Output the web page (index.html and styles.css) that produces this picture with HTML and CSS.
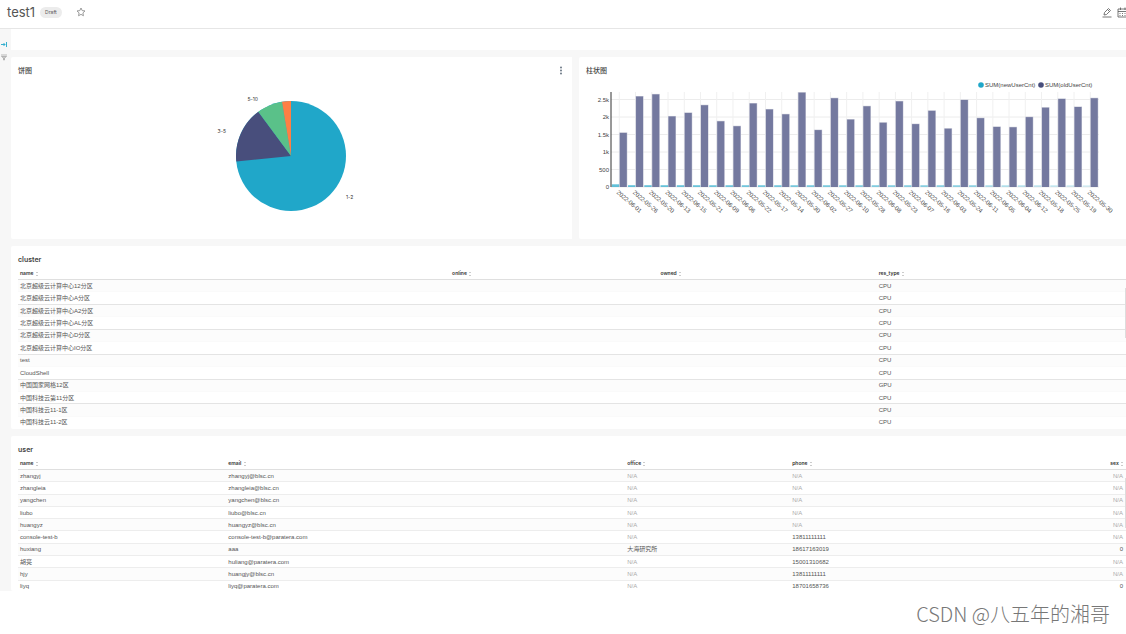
FILE: index.html
```html
<!DOCTYPE html>
<html lang="zh-CN">
<head>
<meta charset="utf-8">
<title>test1</title>
<link rel="stylesheet" href="styles.css">
</head>
<body>
<header class="topbar">
  <h1 class="title">test1</h1>
  <span class="badge">Draft</span>
  <button class="icon-btn star" aria-label="Favorite"><svg width="10" height="10" viewBox="0 0 20 20" fill="none" stroke="#8a8a8a" stroke-width="1.7" stroke-linejoin="round"><path d="M10 2l2.4 5.2 5.6.7-4.200 3.900 1.100 5.700L10 14.700l-4.900 2.800 1.100-5.700L2 7.900l5.600-.7z"/></svg></button>
  <div class="actions">
    <button class="icon-btn" aria-label="Edit"><svg width="10" height="11" viewBox="0 0 20 22" fill="none" stroke="#666" stroke-width="1.800"><path d="M4 16l1-5 8-8 4 4-8 8zM11 5l4 4M1 20h18"/></svg></button>
    <button class="icon-btn" aria-label="Schedule"><svg width="10" height="11" viewBox="0 0 20 22" fill="none" stroke="#555" stroke-width="1.600"><path d="M20 4H2v16h18M2 9h18M7 1v5M16 1v5"/><path d="M5 13h14M5 17h14" stroke-dasharray="2 3"/></svg></button>
  </div>
</header>
<div class="dashboard">
  <aside class="rail">
    <button class="icon-btn" aria-label="Expand"><svg width="6" height="7" viewBox="0 0 12 14" fill="none" stroke="#20a7c9" stroke-width="1.800"><path d="M0 7h8M5 4l3 3-3 3M11 2v10"/></svg></button>
    <button class="icon-btn" aria-label="Filter"><svg width="6" height="7" viewBox="0 0 12 14" fill="#ccc" stroke="#aaa" stroke-width="1.600"><path d="M0 2h12M1 5h10L7 8v4H5V8z"/></svg></button>
  </aside>
  <main class="content">
    <div class="strip"></div>
    <div class="charts">
      <section class="card">
        <div class="card-head"><h2>饼图</h2>
          <button class="icon-btn more" aria-label="More"><svg width="4" height="9" viewBox="0 0 4 9" fill="#5d6b7a"><circle cx="2" cy="1.500" r=".9"/><circle cx="2" cy="4.500" r=".9"/><circle cx="2" cy="7.500" r=".9"/></svg></button>
        </div>
        <svg class="chart" viewBox="0 0 561 164" role="img" aria-label="饼图">
          <circle cx="280" cy="81" r="55" fill="#20a7c9"/>
          <path d="M280 81L225.300 86.600A55 55 0 0 1 247.300 36.800z" fill="#484e7c"/>
          <path d="M280 81L247.300 36.800A55 55 0 0 1 271 26.700z" fill="#5ac189"/>
          <path d="M280 81L271 26.700A55 55 0 0 1 280 26z" fill="#ff7f44"/>
          <text x="247" y="26" text-anchor="end">5-10</text>
          <text x="215" y="58" text-anchor="end">3-5</text>
          <text x="335" y="124">1-2</text>
        </svg>
      </section>
      <section class="card">
        <div class="card-head"><h2>柱状图</h2></div>
        <svg class="chart" id="bars" viewBox="0 0 547 164" role="img" aria-label="柱状图">
          <circle cx="402" cy="10" r="2.800" fill="#20a7c9"/><text class="legend" x="406" y="12">SUM(newUserCnt)</text>
          <circle cx="462" cy="10" r="2.800" fill="#484e7c"/><text class="legend" x="466" y="12">SUM(oldUserCnt)</text>
        </svg>
      </section>
    </div>
    <section class="card">
      <div class="card-head"><h2>cluster</h2></div>
      <div class="scroll">
        <table class="grid cluster">
          <colgroup><col class="c-name"><col class="c-online"><col class="c-owned"><col></colgroup>
          <thead><tr><th>name <i class="sort"></i></th><th>online <i class="sort"></i></th><th>owned <i class="sort"></i></th><th>res_type <i class="sort"></i></th></tr></thead>
          <tbody>
            <tr><td>北京超级云计算中心12分区</td><td></td><td></td><td>CPU</td></tr>
            <tr><td>北京超级云计算中心A分区</td><td></td><td></td><td>CPU</td></tr>
            <tr><td>北京超级云计算中心A2分区</td><td></td><td></td><td>CPU</td></tr>
            <tr><td>北京超级云计算中心AL分区</td><td></td><td></td><td>CPU</td></tr>
            <tr><td>北京超级云计算中心D分区</td><td></td><td></td><td>CPU</td></tr>
            <tr><td>北京超级云计算中心IO分区</td><td></td><td></td><td>CPU</td></tr>
            <tr><td>test</td><td></td><td></td><td>CPU</td></tr>
            <tr><td>CloudShell</td><td></td><td></td><td>CPU</td></tr>
            <tr><td>中国国家网格12区</td><td></td><td></td><td>GPU</td></tr>
            <tr><td>中国科技云第11分区</td><td></td><td></td><td>CPU</td></tr>
            <tr><td>中国科技云11-1区</td><td></td><td></td><td>CPU</td></tr>
            <tr><td>中国科技云11-2区</td><td></td><td></td><td>CPU</td></tr>
          </tbody>
        </table>
      </div>
    </section>
    <section class="card">
      <div class="card-head"><h2>user</h2></div>
      <div class="scroll clipped">
        <table class="grid user">
          <colgroup><col class="u-name"><col class="u-email"><col class="u-office"><col class="u-phone"><col></colgroup>
          <thead><tr><th>name <i class="sort"></i></th><th>email <i class="sort"></i></th><th>office <i class="sort"></i></th><th>phone <i class="sort"></i></th><th class="num">sex <i class="sort"></i></th></tr></thead>
          <tbody>
            <tr><td>zhangyj</td><td>zhangyj@blsc.cn</td><td class="na">N/A</td><td class="na">N/A</td><td class="num na">N/A</td></tr>
            <tr><td>zhangleia</td><td>zhangleia@blsc.cn</td><td class="na">N/A</td><td class="na">N/A</td><td class="num na">N/A</td></tr>
            <tr><td>yangchen</td><td>yangchen@blsc.cn</td><td class="na">N/A</td><td class="na">N/A</td><td class="num na">N/A</td></tr>
            <tr><td>liubo</td><td>liubo@blsc.cn</td><td class="na">N/A</td><td class="na">N/A</td><td class="num na">N/A</td></tr>
            <tr><td>huangyz</td><td>huangyz@blsc.cn</td><td class="na">N/A</td><td class="na">N/A</td><td class="num na">N/A</td></tr>
            <tr><td>console-test-b</td><td>console-test-b@paratera.com</td><td class="na">N/A</td><td>13811111111</td><td class="num na">N/A</td></tr>
            <tr><td>huxiang</td><td>aaa</td><td>大海研究所</td><td>18617163019</td><td class="num">0</td></tr>
            <tr><td>胡亮</td><td>huliang@paratera.com</td><td class="na">N/A</td><td>15001310682</td><td class="num na">N/A</td></tr>
            <tr><td>hjy</td><td>huangjy@blsc.cn</td><td class="na">N/A</td><td>13811111111</td><td class="num na">N/A</td></tr>
            <tr><td>liyq</td><td>liyq@paratera.com</td><td class="na">N/A</td><td>18701658736</td><td class="num">0</td></tr>
          </tbody>
        </table>
      </div>
    </section>
  </main>
</div>
<footer class="credit">CSDN @八五年的湘哥</footer>
<script src="chart.js"></script>
</body>
</html>
```
FILE: styles.css
```css
* { box-sizing: border-box; }
body {
  margin: 0;
  background: #fff;
  color: #484848;
  font-family: Inter, "Noto Sans CJK SC", sans-serif;
  overflow: hidden;
}
.icon-btn { display: flex; padding: 0; border: 0; background: none; }
.topbar {
  display: flex;
  align-items: center;
  height: 29px;
  padding: 0 0 4px 7px;
  border-bottom: 1px solid #e6e6e6;
}
.title { margin: 0 5px 0 0; font-size: 13px; line-height: 16px; font-weight: 400; color: #555; }
.badge { padding: 0 5px; border-radius: 6px; background: #ececec; font-size: 5px; line-height: 11px; color: #555; }
.star { margin-left: 14px; }
.actions { display: flex; gap: 5px; margin-left: auto; margin-right: -1px; }
.dashboard { display: flex; background: #f7f7f7; }
.rail { display: flex; flex-direction: column; gap: 6px; width: 11px; flex: none; padding: 12px 0 0 1px; }
.content { display: flex; flex-direction: column; gap: 7px; flex: 1; min-width: 0; }
.strip { height: 21px; background: #fff; }
.charts { display: grid; grid-template-columns: 561fr 547fr; gap: 7px; }
.card { background: #fff; padding-top: 9px; border-radius: 2px 0 0 2px; }
.card-head { display: flex; justify-content: space-between; padding: 0 9px 0 7px; height: 12px; }
.charts .card-head { height: 9px; }
h2 { margin: 0; font-size: 7px; line-height: 9px; font-weight: 600; color: #444; }
.charts h2 { font-weight: 500; }
.chart { display: block; width: 100%; height: auto; font-size: 5px; fill: #333; }
.axis, .legend { font-family: "Liberation Sans", sans-serif; font-size: 6px; fill: #444; }
.scroll { position: relative; padding: 0 0 1px 7px; }
.scroll::after { content: ""; position: absolute; right: 0; top: 21px; width: 1px; height: 50px; background: #ddd; }
.clipped { height: 134px; overflow: hidden; padding-bottom: 0; }
.grid { width: 100%; border-spacing: 0; table-layout: fixed; font-size: 6px; line-height: 8px; }
.cluster { height: 161px; }
.user { height: 136px; }
th, td { padding: 0 3px 0 2px; text-align: left; font-weight: 400; white-space: nowrap; }
th { height: 13px; font-size: 5px; font-weight: 600; color: #333; border-bottom: 1px solid #dfdfdf; }
td { font-family: "Liberation Sans", "Noto Sans CJK SC", sans-serif; color: #555; border-bottom: 1px solid #ededed; }
tbody tr:nth-child(odd) { background: #fcfcfc; }
.cluster tbody tr:nth-child(odd) td { border-bottom-color: #fafafa; }
.cluster tbody tr:nth-child(even) td { border-bottom-color: #e4e4e4; }
.cluster tbody tr:last-child td { border-bottom: 0; }
.grid .num { text-align: right; }
.grid .na { color: #aaa; }
.sort { display: inline-block; width: 2px; height: 4px; margin-left: 1px; border: solid #ccc; border-width: 1px 0; vertical-align: middle; }
.c-name { width: 39%; }
.c-online { width: 18.8%; }
.c-owned { width: 19.7%; }
.u-name { width: 18.8%; }
.u-email { width: 36%; }
.u-office { width: 14.9%; }
.u-phone { width: 15%; }
.credit {
  padding: 9px 16px 0 0;
  text-align: right;
  font-family: "Noto Sans CJK SC", sans-serif;
  font-size: 20px;
  line-height: 28px;
  font-weight: 300;
  color: #777;
}
```
FILE: chart.js
```js
const days = [
  ["06-01", 1560], ["05-26", 2600], ["05-20", 2660], ["06-13", 2030], ["06-15", 2130],
  ["05-21", 2350], ["06-09", 1890], ["06-06", 1750], ["05-22", 2400], ["05-17", 2230],
  ["05-14", 2090], ["05-30", 2710], ["06-02", 1640], ["05-27", 2550], ["06-10", 1940],
  ["05-28", 2320], ["06-08", 1850], ["05-23", 2460], ["06-07", 1810], ["05-16", 2190],
  ["06-03", 1680], ["05-24", 2500], ["06-11", 1980], ["06-05", 1730], ["06-04", 1720],
  ["06-12", 2010], ["05-18", 2280], ["05-25", 2530], ["05-19", 2300], ["05-30", 2550]
];
const svg = document.getElementById("bars");
const BASE = 112, SCALE = 0.035, LEFT = 32, STEP = 16.24;

function add(tag, attrs, text) {
  const el = document.createElementNS("http://www.w3.org/2000/svg", tag);
  for (const key in attrs) el.setAttribute(key, attrs[key]);
  if (text) el.textContent = text;
  svg.appendChild(el);
}

["0", "500", "1k", "1.5k", "2k", "2.5k"].forEach((label, i) => {
  const y = BASE - i * 500 * SCALE;
  add("path", { d: `M${LEFT} ${y}H520`, stroke: "#ececec" });
  add("text", { class: "axis", x: 30, y: y + 2, "text-anchor": "end" }, label);
});
days.forEach(([day, value], i) => {
  const x = LEFT + 8.3 + i * STEP;
  const height = value * SCALE;
  add("path", { d: `M${x} 17V${BASE}`, stroke: "#f0f0f0" });
  add("rect", { x: x - 7.5, y: BASE - (i ? 1.8 : 2.7), width: 7.5, height: i ? 1.8 : 2.7, fill: "#20a7c9", opacity: i < 23 ? 0.7 - i * 0.01 : 0.35 - (i - 23) * 0.03 });
  add("rect", { x: x, y: BASE - height, width: 8, height: height, fill: "#c8cad8" });
  add("rect", { x: x + 0.5, y: BASE - height + 0.5, width: 7, height: height - 0.5, fill: "#74799f" });
  add("text", { class: "axis", transform: `translate(${x - 3} 118) rotate(41)` }, "2022-" + day);
});
add("path", { d: `M${LEFT} 17V${BASE}`, stroke: "#333" });
```
